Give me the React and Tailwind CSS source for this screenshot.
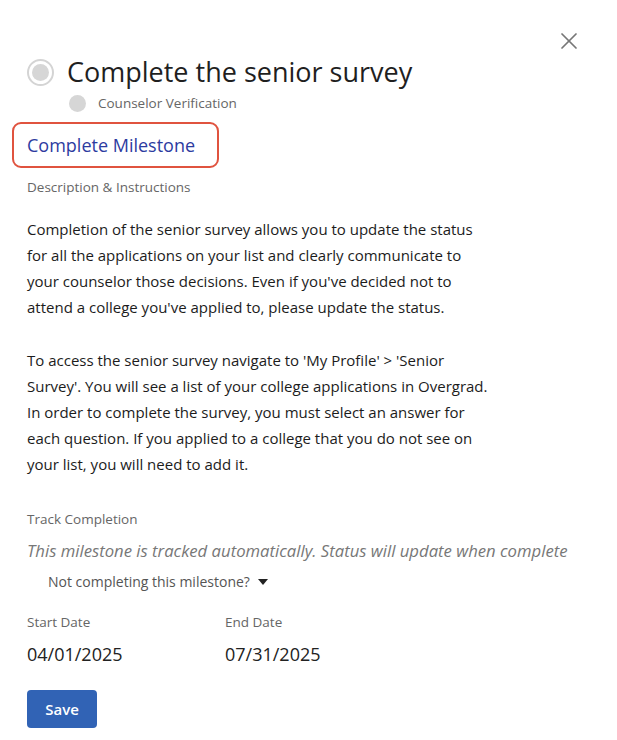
import { X } from 'lucide-react';

export default function App() {
  return (
    <div className="w-[617px] h-[740px] bg-white px-[27px] font-['Open_Sans',sans-serif] text-[#222]">
      <div className="flex justify-end pt-[27px] pr-[7px]">
        <button className="text-[#777]">
          <X size={28} strokeWidth={1.5} />
        </button>
      </div>

      <div className="flex items-center gap-[13px] -mt-[1px]">
        <span className="w-[27px] h-[27px] rounded-full border-2 border-[#d4d4d4] flex items-center justify-center">
          <span className="w-[17px] h-[17px] rounded-full bg-[#d6d6d6]" />
        </span>
        <h1 className="text-[27px] leading-[36px] text-[#1f1f1f]">Complete the senior survey</h1>
      </div>

      <div className="flex items-center gap-[12px] ml-[42px] mt-[3px]">
        <span className="w-[17px] h-[17px] rounded-full bg-[#d6d6d6]" />
        <span className="text-[13.5px] text-[#666]">Counselor Verification</span>
      </div>

      <div className="mt-[9px] -ml-[15px] w-[207px] h-[46px] border-2 border-[#e0533f] rounded-[9px] flex items-center pl-[13px]">
        <span className="text-[18px] text-[#2d3b9f]">Complete Milestone</span>
      </div>

      <p className="mt-[9px] text-[13.5px] text-[#666]">Description &amp; Instructions</p>

      <div className="mt-[18px] text-[15px] leading-[26px] text-[#1c1c1c]">
        <p>
          Completion of the senior survey allows you to update the status<br />
          for all the applications on your list and clearly communicate to<br />
          your counselor those decisions. Even if you've decided not to<br />
          attend a college you've applied to, please update the status.
        </p>
        <p className="mt-[27px]">
          To access the senior survey navigate to 'My Profile' &gt; 'Senior<br />
          Survey'. You will see a list of your college applications in Overgrad.<br />
          In order to complete the survey, you must select an answer for<br />
          each question. If you applied to a college that you do not see on<br />
          your list, you will need to add it.
        </p>
      </div>

      <p className="mt-[32px] text-[13.5px] text-[#666]">Track Completion</p>
      <p className="mt-[9px] text-[16.7px] italic text-[#777]">
        This milestone is tracked automatically. Status will update when complete
      </p>
      <div className="mt-[8px] ml-[21px] flex items-center gap-[8px] text-[14px] text-[#555]">
        <span>Not completing this milestone?</span>
        <svg width="10" height="6" viewBox="0 0 10 6" className="mt-[1px]">
          <path d="M0 0h10L5 6z" fill="#222" />
        </svg>
      </div>

      <div className="mt-[20px] flex">
        <div className="w-[198px]">
          <p className="text-[13.5px] text-[#666]">Start Date</p>
          <p className="mt-[9px] text-[18px] text-[#222]">04/01/2025</p>
        </div>
        <div>
          <p className="text-[13.5px] text-[#666]">End Date</p>
          <p className="mt-[9px] text-[18px] text-[#222]">07/31/2025</p>
        </div>
      </div>

      <button className="mt-[22px] w-[70px] h-[38px] rounded-[4px] bg-[#3163b5] text-white text-[15px] font-semibold">
        Save
      </button>
    </div>
  );
}
